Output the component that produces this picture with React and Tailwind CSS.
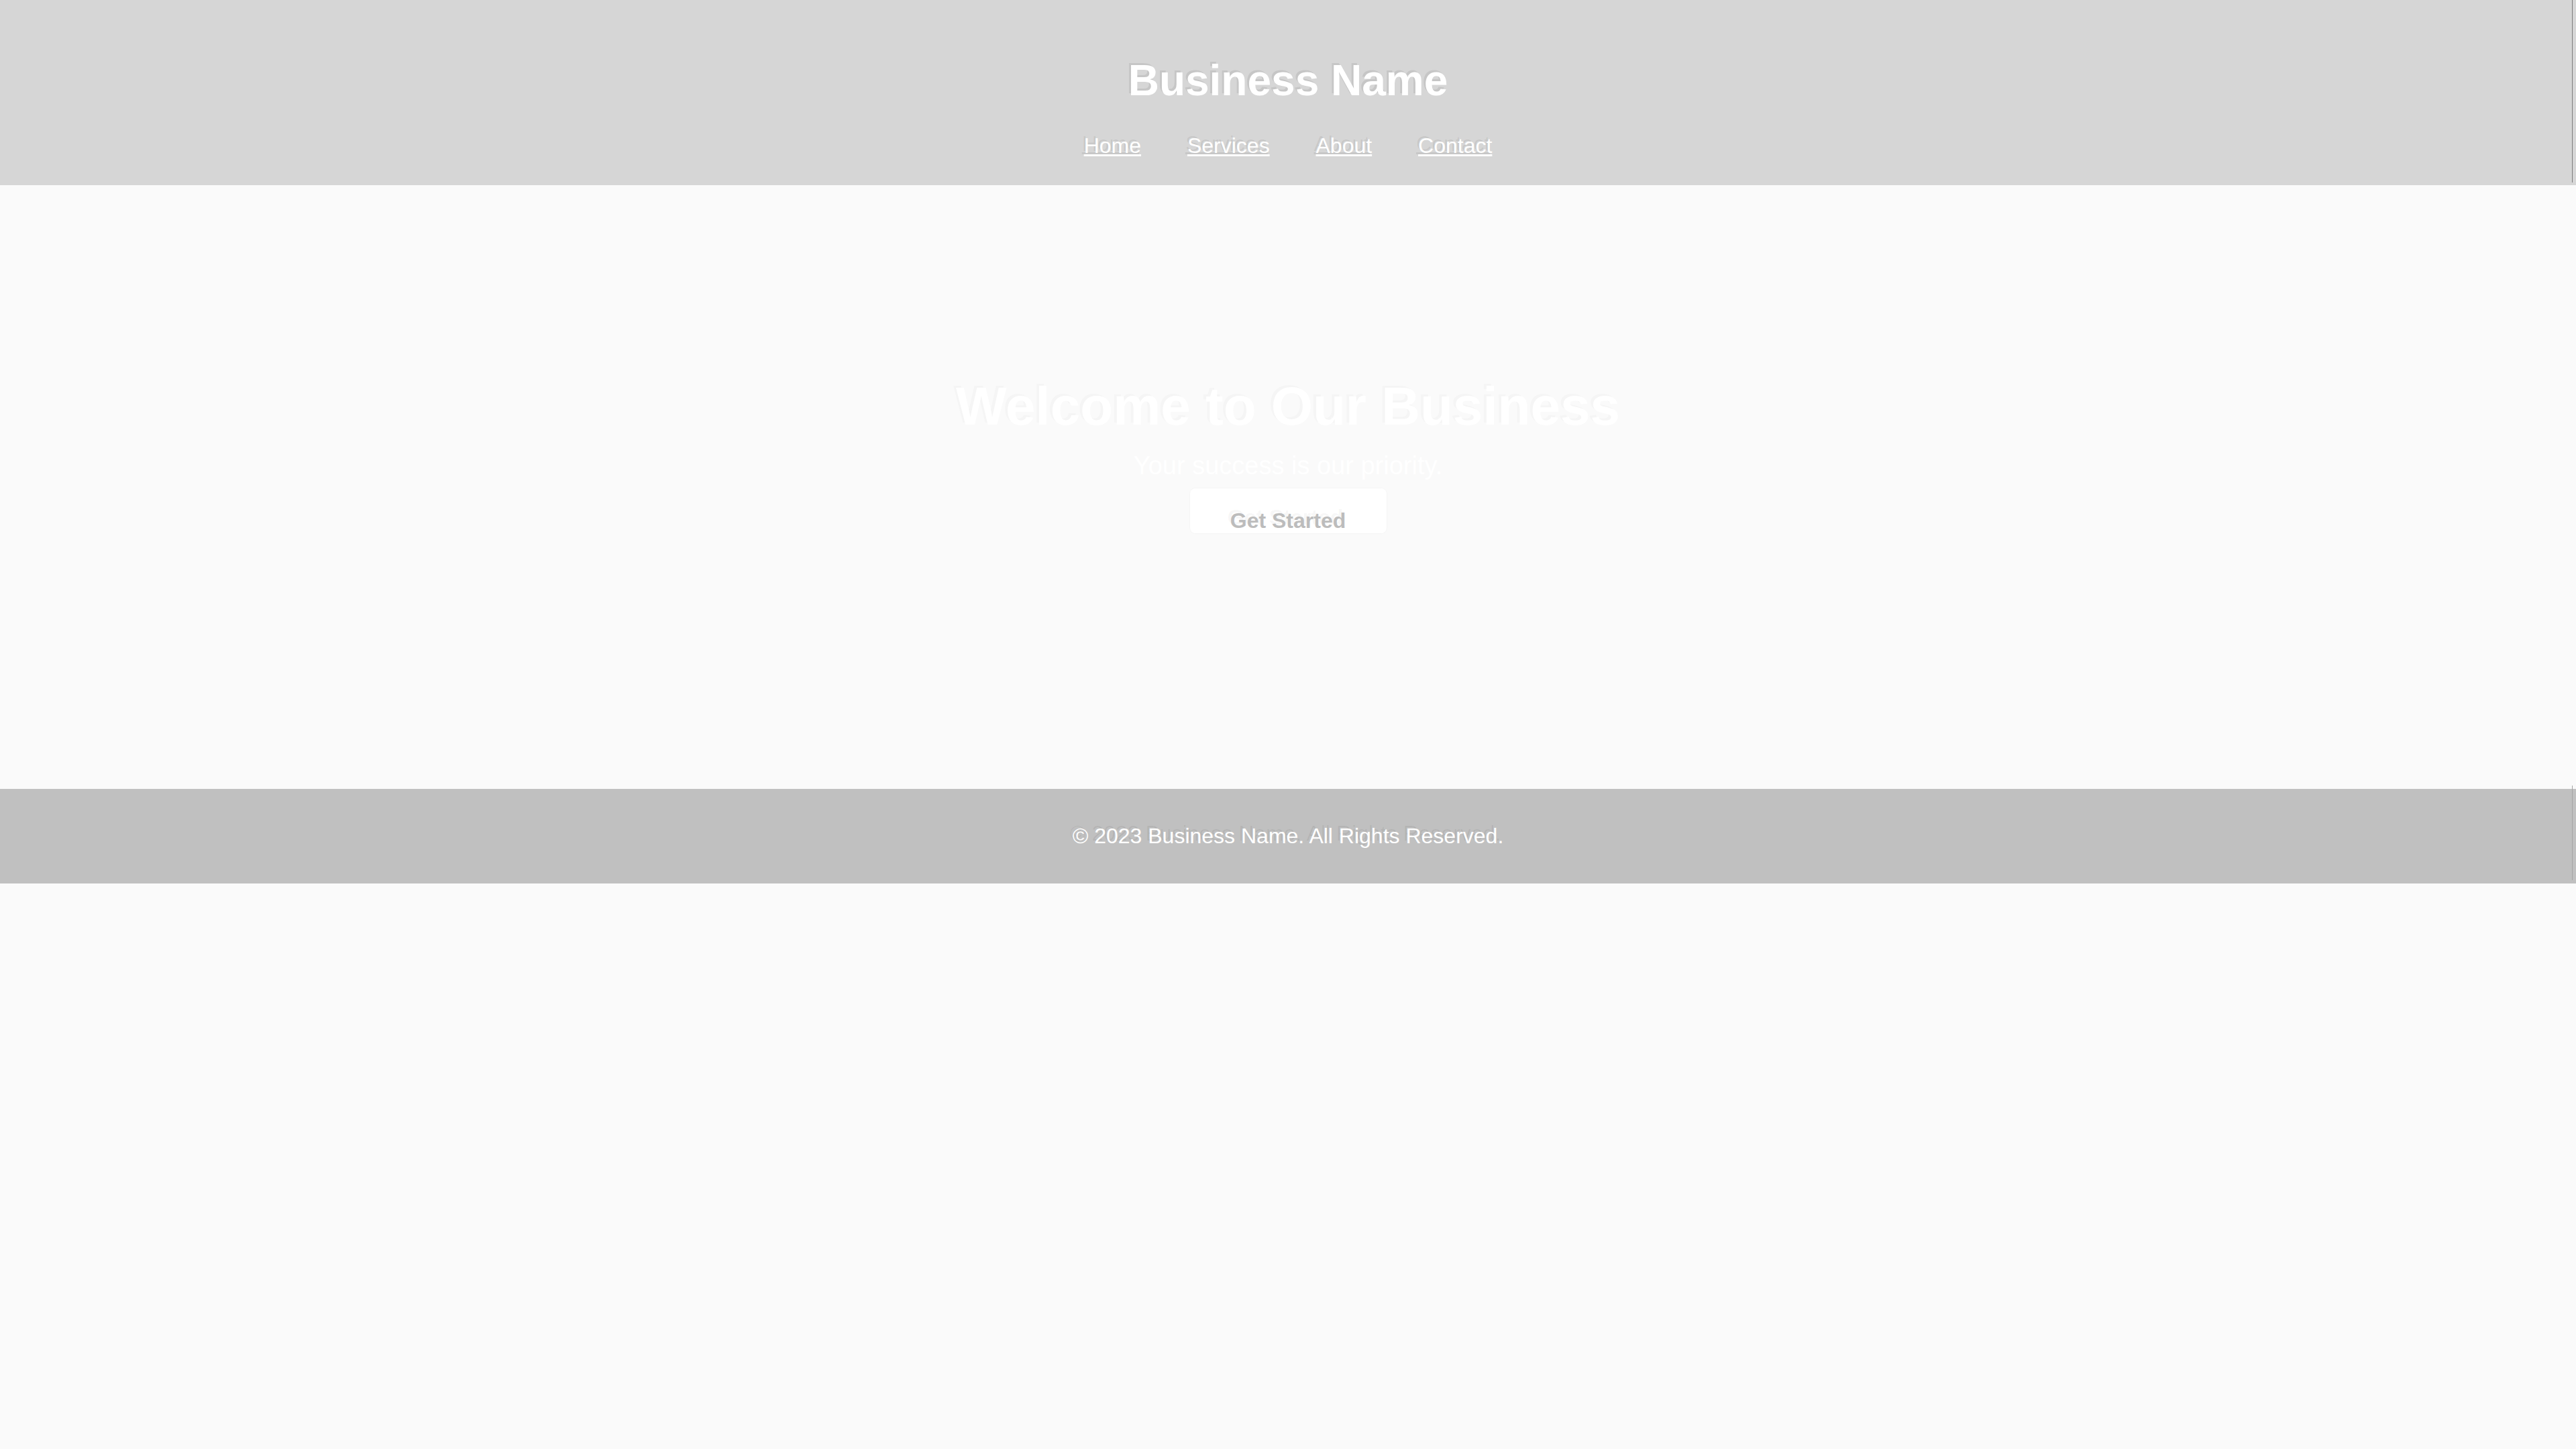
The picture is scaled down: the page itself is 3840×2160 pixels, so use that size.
import React from "react";

const font = { fontFamily: '"Liberation Sans", Arial, sans-serif' };

export default function App() {
  return (
    <div className="min-h-screen w-full bg-[#fafafa]" style={font}>
      <header className="relative bg-[#d6d6d6] py-[40px] text-center text-white">
        <h1 className="mt-[44px] mb-[41.88px] text-[64px] font-bold leading-[73.5px] [text-shadow:-3px_-3px_0_rgba(0,0,0,0.07)]">
          Business Name
        </h1>
        <nav className="text-[32px] leading-[36.8px] [text-shadow:-3px_-3px_0_rgba(0,0,0,0.07)]">
          <a href="#" className="mx-[30px] text-white underline">Home</a>{" "}
          <a href="#" className="mx-[30px] text-white underline">Services</a>{" "}
          <a href="#" className="mx-[30px] text-white underline">About</a>{" "}
          <a href="#" className="mx-[30px] text-white underline">Contact</a>
        </nav>
        <div className="absolute right-[5px] top-0 h-[272px] w-px bg-[#7c7c7c]" />
      </header>

      <section className="flex h-[900px] flex-col items-center pt-[284px] text-center">
        <h2 className="text-[80px] font-bold leading-[92px] text-white [text-shadow:-4px_-3px_0_rgba(0,0,0,0.018)]">
          Welcome to Our Business
        </h2>
        <p className="mt-[20px] text-[38px] leading-[44px] text-white [text-shadow:-3px_-3px_0_rgba(0,0,0,0.02)]">
          Your success is our priority.
        </p>
        <a
          href="#"
          className="mt-[12px] flex h-[67px] w-[293px] justify-center rounded-[8px] bg-white pt-[30px] text-[32px] font-bold leading-[36.8px] text-[#bcbcbc] shadow-[0_0_0_1px_rgba(0,0,0,0.02)] [text-shadow:-4px_-5px_0_rgba(0,0,0,0.05)]"
        >
          Get Started
        </a>
      </section>

      <footer className="relative bg-[#c0c0c0] py-[52px] text-center text-[32px] leading-[36.8px] text-white">
        <p className="[text-shadow:-4px_-4px_0_rgba(0,0,0,0.06)]">© 2023 Business Name. All Rights Reserved.</p>
        <div className="absolute right-[5px] top-[-5px] h-[141px] w-px bg-[#a4a4a4]" />
      </footer>
    </div>
  );
}
